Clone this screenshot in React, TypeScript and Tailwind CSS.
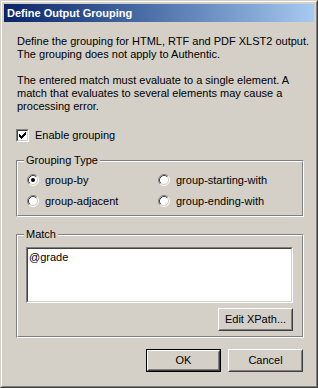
import type { ReactNode } from "react";

function Radio({ checked }: { checked?: boolean }) {
  return (
    <svg width="12" height="12" viewBox="0 0 12 12" className="shrink-0">
      <circle cx="6" cy="6" r="4.5" fill="#fff" />
      <path d="M2.11 9.89 A5.5 5.5 0 0 1 9.89 2.11" fill="none" stroke="#808080" />
      <path d="M9.89 2.11 A5.5 5.5 0 0 1 2.11 9.89" fill="none" stroke="#fff" />
      <path d="M2.82 9.18 A4.5 4.5 0 0 1 9.18 2.82" fill="none" stroke="#404040" />
      <path d="M9.18 2.82 A4.5 4.5 0 0 1 2.82 9.18" fill="none" stroke="#d4d0c8" />
      {checked && <circle cx="6" cy="6" r="2" fill="#000" />}
    </svg>
  );
}

function Checkbox({ checked }: { checked?: boolean }) {
  const cols = [
    [1, 3],
    [2, 4],
    [3, 5],
    [4, 4],
    [5, 3],
    [6, 2],
    [7, 1],
  ];
  return (
    <div className="h-[13px] w-[13px] shrink-0 border border-t-[#808080] border-l-[#808080] border-r-white border-b-white">
      <div className="h-full w-full border border-t-[#404040] border-l-[#404040] border-r-[#d4d0c8] border-b-[#d4d0c8] bg-white">
        {checked && (
          <svg width="9" height="9" viewBox="0 0 9 9" shapeRendering="crispEdges">
            {cols.map(([x, y]) => (
              <rect key={x} x={x} y={y} width="1" height="3" fill="#000" />
            ))}
          </svg>
        )}
      </div>
    </div>
  );
}

function Button({ children, isDefault }: { children: ReactNode; isDefault?: boolean }) {
  const bevel = (
    <div className="h-full w-full border border-t-white border-l-white border-r-[#404040] border-b-[#404040]">
      <div className="flex h-full w-full items-center justify-center border border-t-[#d4d0c8] border-l-[#d4d0c8] border-r-[#808080] border-b-[#808080]">
        {children}
      </div>
    </div>
  );
  return (
    <div className="h-[23px] w-[75px] bg-[#d4d0c8]">
      {isDefault ? <div className="h-full w-full border border-black">{bevel}</div> : bevel}
    </div>
  );
}

function GroupBox({ label, className, children }: { label: string; className: string; children: ReactNode }) {
  return (
    <div className={`relative border border-t-[#808080] border-l-[#808080] border-r-white border-b-white ${className}`}>
      <div className="h-full w-full border border-t-white border-l-white border-r-[#808080] border-b-[#808080]">
        {children}
      </div>
      <span className="absolute left-[7px] top-[-7px] bg-[#d4d0c8] px-[2px] leading-[13px]">{label}</span>
    </div>
  );
}

export default function App() {
  return (
    <div className="h-[388px] w-[318px] border border-t-[#d4d0c8] border-l-[#d4d0c8] border-r-[#404040] border-b-[#404040] font-['Liberation_Sans',Arial,sans-serif] text-[11px] leading-[13px] text-black">
      <div className="flex h-full w-full flex-col border border-t-white border-l-white border-r-[#808080] border-b-[#808080] bg-[#d4d0c8] p-[2px]">
        <div className="flex h-[18px] shrink-0 items-center bg-gradient-to-r from-[#0a246a] to-[#a6caf0] pl-[3px] font-bold text-white">
          Define Output Grouping
        </div>

        <div className="flex flex-1 flex-col pl-[12px] pr-[10px] pt-[13px]">
          <p className="whitespace-nowrap pl-[1px]">
            Define the grouping for HTML, RTF and PDF XLST2 output.
            <br />
            The grouping does not apply to Authentic.
          </p>
          <p className="mt-[13px] whitespace-nowrap pl-[1px]">
            The entered match must evaluate to a single element. A
            <br />
            match that evaluates to several elements may cause a
            <br />
            processing error.
          </p>

          <label className="mt-[16px] flex h-[13px] items-center gap-[6px]">
            <Checkbox checked />
            <span>Enable grouping</span>
          </label>

          <GroupBox label="Grouping Type" className="mt-[18px] h-[57px]">
            <div className="grid grid-cols-[131px_1fr] gap-y-[9px] pl-[9px] pt-[12px]">
              {[
                ["group-by", true],
                ["group-starting-with", false],
                ["group-adjacent", false],
                ["group-ending-with", false],
              ].map(([name, on]) => (
                <div key={name as string} className="flex h-[12px] items-center gap-[6px]">
                  <Radio checked={on as boolean} />
                  <span>{name as string}</span>
                </div>
              ))}
            </div>
          </GroupBox>

          <GroupBox label="Match" className="mt-[17px] h-[104px]">
            <div className="flex flex-col pl-[8px] pr-[9px] pt-[11px]">
              <div className="h-[56px] border border-t-[#808080] border-l-[#808080] border-r-white border-b-white">
                <div className="h-full w-full border border-t-[#404040] border-l-[#404040] border-r-[#d4d0c8] border-b-[#d4d0c8] bg-white px-[1px] pt-[2px]">
                  @grade
                </div>
              </div>
              <div className="mt-[5px] flex justify-end">
                <Button>Edit XPath...</Button>
              </div>
            </div>
          </GroupBox>

          <div className="mr-[1px] mt-[11px] flex justify-end gap-[7px]">
            <Button isDefault>OK</Button>
            <Button>Cancel</Button>
          </div>
        </div>
      </div>
    </div>
  );
}
